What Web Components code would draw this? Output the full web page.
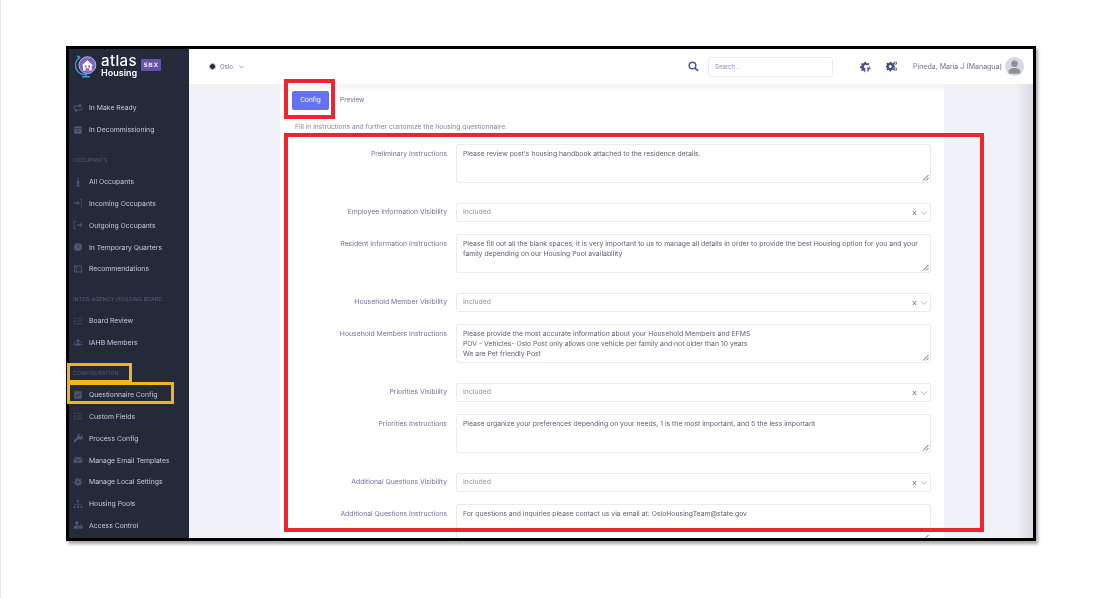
<!DOCTYPE html>
<html lang="en">
<head>
<meta charset="utf-8">
<title>Questionnaire Config</title>
<style>
  html, body { margin: 0; height: 598px; overflow: hidden; background: #fff; }
  body { font-family: Inter, "Open Sans", sans-serif; }
</style>
</head>
<body>
<atlas-page>
  <side-nav>
    <nav-item icon="repeat">In Make Ready</nav-item>
    <nav-item icon="archive">In Decommissioning</nav-item>
    <nav-section>OCCUPANTS</nav-section>
    <nav-item icon="person">All Occupants</nav-item>
    <nav-item icon="signin">Incoming Occupants</nav-item>
    <nav-item icon="signout">Outgoing Occupants</nav-item>
    <nav-item icon="clock">In Temporary Quarters</nav-item>
    <nav-item icon="panel">Recommendations</nav-item>
    <nav-section>INTER-AGENCY HOUSING BOARD</nav-section>
    <nav-item icon="list">Board Review</nav-item>
    <nav-item icon="users">IAHB Members</nav-item>
    <nav-section>CONFIGURATION</nav-section>
    <nav-item icon="check">Questionnaire Config</nav-item>
    <nav-item icon="list">Custom Fields</nav-item>
    <nav-item icon="wrench">Process Config</nav-item>
    <nav-item icon="mail">Manage Email Templates</nav-item>
    <nav-item icon="gear">Manage Local Settings</nav-item>
    <nav-item icon="tree">Housing Pools</nav-item>
    <nav-item icon="lock">Access Control</nav-item>
  </side-nav>
  <top-bar></top-bar>
  <config-card>
    <form-row label="Preliminary Instructions" kind="text">Please review post's housing handbook attached to the residence details.</form-row>
    <form-row label="Employee Information Visibility" kind="select">Included</form-row>
    <form-row label="Resident Information Instructions" kind="text">Please fill out all the blank spaces, it is very important to us to manage all details in order to provide the best Housing option for you and your<br>family depending on our Housing Pool availability</form-row>
    <form-row label="Household Member Visibility" kind="select">Included</form-row>
    <form-row label="Household Members Instructions" kind="text">Please provide the most accurate information about your Household Members and EFMS<br>POV - Vehicles- Oslo Post only allows one vehicle per family and not older than 10 years<br>We are Pet friendly Post</form-row>
    <form-row label="Priorities Visibility" kind="select">Included</form-row>
    <form-row label="Priorities Instructions" kind="text">Please organize your preferences depending on your needs, 1 is the most important, and 5 the less important</form-row>
    <form-row label="Additional Questions Visibility" kind="select">Included</form-row>
    <form-row label="Additional Questions Instructions" kind="text">For questions and inquiries please contact us via email at: OsloHousingTeam@state.gov</form-row>
  </config-card>
</atlas-page>

<script>
// Sidebar icons, all on a 16x16 box
const NAV_ICONS = {
  repeat: '<path d="M2 8.500V6.500A2 2 0 0 1 4 4.500h8M10 2l3 2.500-3 2.500M14 7.500v2a2 2 0 0 1-2 2H4M6 9l-3 2.500L6 14" fill="none" stroke="currentColor" stroke-width="1.800"/>',
  archive: '<path d="M2 2h12v3.500H2zM2 6.500h12V14H2z"/><path d="M6 9h4" stroke="#252a3b" stroke-width="1.200"/>',
  person: '<circle cx="8" cy="2.800" r="1.700"/><path d="M6 5.500h4l.5 5H9.500V14h-3v-3.500h-1z"/><ellipse cx="8" cy="14.200" rx="4" ry="1"/>',
  signin: '<path d="M1 7h6V4.500L11 8l-4 3.500V9H1z"/><path d="M11 2.500h2.500v11H11" fill="none" stroke="currentColor" stroke-width="1.100"/>',
  signout: '<path d="M6 7h5V4l4 4-4 4V9H6z"/><path d="M5 2.500H1.500v11H5" fill="none" stroke="currentColor" stroke-width="1.400"/>',
  clock: '<circle cx="8" cy="8" r="6.500"/><path d="M8 4v4.500l2.500 1" fill="none" stroke="#252a3b" stroke-width="1"/>',
  panel: '<path fill-rule="evenodd" d="M1.500 2.500h13v11h-13zM6 4v8h7V4zM3 4v8h1.700V4z"/>',
  list: '<path d="M1.500 2.500h2v2h-2zM1.500 7h2v2h-2zM1.500 11.500h2v2h-2zM5.500 3h9v1h-9zM5.500 7.500h9v1h-9zM5.500 12h9v1h-9z"/>',
  users: '<circle cx="8" cy="4.500" r="2.500"/><path d="M3.500 12c0-2.500 2-4 4.500-4s4.500 1.500 4.500 4z"/><circle cx="2.500" cy="7" r="1.300"/><circle cx="13.500" cy="7" r="1.300"/><path d="M0 11c0-1.200 1-2 2.500-2l.5 2zM16 11c0-1.200-1-2-2.500-2l-.5 2z"/>',
  check: '<path fill-rule="evenodd" d="M2 2h12v12H2zM4 8.200l3 3 5-5.500-1.100-1L7 9 5 7.100z"/>',
  wrench: '<path d="M14.500 3.500l-2.500 2-1.800-.5-.4-1.800 2.200-2.200a4 4 0 0 0-5 5L1.500 12a1.700 1.700 0 0 0 2.400 2.400L9 9.500a4 4 0 0 0 5.500-6z"/>',
  mail: '<path d="M1 3.500h14L8 8.500z"/><path d="M1 5l7 5 7-5v7.500H1z"/>',
  gear: '<circle cx="8" cy="8" r="5"/><path d="M7 1h2v3H7zM7 12h2v3H7zM1 7h3v2H1zM12 7h3v2h-3zM2.800 4.200l1.400-1.400 2 2-1.400 1.400zM9.800 11.200l1.400-1.400 2 2-1.400 1.400zM11.800 2.800l1.400 1.400-2 2-1.400-1.400zM4.800 9.800l1.400 1.400-2 2-1.400-1.400z"/><circle cx="8" cy="8" r="1.800" fill="#252a3b"/>',
  tree: '<circle cx="8" cy="3" r="2"/><circle cx="2.500" cy="13" r="1.700"/><circle cx="8" cy="13" r="1.700"/><circle cx="13.500" cy="13" r="1.700"/><path d="M2.500 11V8.500h11V11M8 5v6" fill="none" stroke="currentColor" stroke-width=".9"/>',
  lock: '<circle cx="6" cy="4.500" r="3"/><path d="M0.500 14c0-3.500 2.500-5.500 5.500-5.500 1 0 1.800.2 2.500.6V14z"/><path d="M9.500 9.500h6V14h-6z"/><path d="M11 9.500V8a1.500 1.500 0 0 1 3 0v1.500" fill="none" stroke="currentColor"/>'
};

class AtlasPage extends HTMLElement {
  constructor() {
    super();
    this.attachShadow({mode: 'open'}).innerHTML = `
      <style>
        :host { display: block; width: 1108px; height: 598px; box-sizing: border-box; padding: 46px 72px 57px 66px; border-left: 1px solid #e4e4e6; position: relative; }
        .frame { width: 970px; height: 495px; box-sizing: border-box; border: 3px solid #000; display: grid; grid-template-columns: 120px 1fr; grid-template-rows: 35px 1fr; overflow: hidden; box-shadow: 2px 3px 3px rgba(60,60,70,.45); background: #f1f2f7; margin-left: -1px; filter: blur(.3px); }
        ::slotted(side-nav) { grid-row: 1 / 3; }
        .red, .amber { position: absolute; box-sizing: border-box; pointer-events: none; z-index: 2; }
        .red { border: 4px solid #ee2430; }
        .amber { border: 3px solid #f5b41e; }
      </style>
      <div class="frame"><slot></slot></div>
      <div class="red" style="left:283px;top:79px;width:51px;height:40px"></div>
      <div class="red" style="left:283px;top:133px;width:700px;height:399px"></div>
      <div class="amber" style="left:66px;top:363px;width:65px;height:20px"></div>
      <div class="amber" style="left:66px;top:382px;width:107px;height:22px"></div>
    `;
  }
}

class SideNav extends HTMLElement {
  constructor() {
    super();
    this.attachShadow({mode: 'open'}).innerHTML = `
      <style>
        :host { display: block; background: #252a3b; overflow: hidden; min-height: 0; }
        .brand { height: 48px; box-sizing: border-box; padding: 5px 0 0 6px; display: flex; align-items: flex-start; gap: 3px; opacity: .999; }
        .words { display: flex; flex-direction: column; color: #fff; font-weight: 600; width: 37px; }
        .atlas { font-size: 15px; line-height: 14px; letter-spacing: .4px; font-weight: 500; }
        .housing { font-size: 9px; line-height: 10px; }
        .sbx { background: #6a50a8; color: #e6e0f5; font: 700 6px/12px "DejaVu Sans", sans-serif; letter-spacing: .5px; width: 20px; height: 12px; text-align: center; border-radius: 1px; margin: 5px 0 0 0; }
      </style>
      <div class="brand">
        <svg width="23" height="25" viewBox="0 0 26 27">
          <path d="M5 3.500A10.500 10.500 0 0 0 12 22.500M2.500 1.500l3.500 2" fill="none" stroke="#3f9ad8" stroke-width="1.800"/>
          <path d="M8 25h9M12.500 22v3" stroke="#3f9ad8" stroke-width="1.800"/>
          <circle cx="14" cy="12" r="9.500" fill="#7b63c4"/>
          <circle cx="14" cy="12" r="9.500" fill="none" stroke="#c9c1ea" stroke-width="1"/>
          <path d="M7.500 12.500L14 6.500l6.500 6h-1.500v5.500h-10v-5.500z" fill="#fff"/>
          <path d="M11 12.500h2v2h-2zM15 12.500h2v2h-2z" fill="#7b63c4"/>
          <path d="M12 15.500h4V18h-4z" fill="#e0486a"/>
        </svg>
        <div class="words"><span class="atlas">atlas</span><span class="housing">Housing</span></div>
        <span class="sbx">SBX</span>
      </div>
      <slot></slot>
    `;
  }
}

class NavSection extends HTMLElement {
  constructor() {
    super();
    this.attachShadow({mode: 'open'}).innerHTML = `
      <style>
        :host { display: block; height: 30.200px; box-sizing: border-box; padding: 14px 0 0 4px; font-size: 5.200px; line-height: 10px; letter-spacing: .22px; color: #565c7c; white-space: nowrap; opacity: .999; }
      </style>
      <slot></slot>
    `;
  }
}

class NavItem extends HTMLElement {
  constructor() {
    super();
    this.attachShadow({mode: 'open'});
  }

  connectedCallback() {
    const icon = NAV_ICONS[this.getAttribute('icon')] || '';
    this.shadowRoot.innerHTML = `
      <style>
        :host { display: flex; align-items: center; height: 21.800px; padding-left: 4px; color: #c6c9da; font-size: 6.850px; white-space: nowrap; opacity: .999; }
        svg { width: 10px; height: 10px; fill: currentColor; color: #4f5572; flex: none; }
        span { margin-left: 6px; }
      </style>
      <svg viewBox="0 0 16 16" aria-hidden="true">${icon}</svg>
      <span><slot></slot></span>
    `;
  }
}

class TopBar extends HTMLElement {
  constructor() {
    super();
    this.attachShadow({mode: 'open'}).innerHTML = `
      <style>
        :host { display: flex; align-items: center; background: #fff; padding: 0 9px 0 20px; color: #6b7090; font-size: 6px; position: relative; z-index: 1; }
        .dot { width: 7px; height: 7px; border-radius: 50%; background: #23273a; border: 1px solid #c9cad6; box-sizing: border-box; }
        .post, .name, input { opacity: .999; }
        .post { margin-left: 4px; }
        .grow { flex: 1; }
        input { width: 125px; height: 20px; box-sizing: border-box; border: 1px solid #e9eaf3; border-radius: 3px; margin: 0 27px 0 9px; padding: 0 6px; font: 6px Inter, sans-serif; color: #6b7090; outline: none; }
        input::placeholder { color: #8e92aa; opacity: 1; }
        svg.tool { fill: #4a5080; display: block; }
        .name { margin: 0 3px 0 15px; font-size: 7px; white-space: nowrap; }
        .avatar { width: 19px; height: 19px; border-radius: 50%; background: #d8d9e0; overflow: hidden; }
      </style>
      <span class="dot"></span>
      <span class="post">Oslo</span>
      <svg width="5" height="4" viewBox="0 0 6 4" style="margin-left:6px"><path d="M.5.500L3 3 5.500.500" fill="none" stroke="#6b7090" stroke-width=".9"/></svg>
      <span class="grow"></span>
      <svg width="11" height="11" viewBox="0 0 16 16"><circle cx="6.500" cy="6.500" r="4.800" fill="none" stroke="#4a5a92" stroke-width="2.200"/><path d="M10 10l4.500 4.500" stroke="#4a5a92" stroke-width="2.600"/></svg>
      <input placeholder="Search...">
      <svg class="tool" width="12" height="12" viewBox="0 0 16 16" style="margin-right:14px">
        <path d="M6 2h2l.4 1.600 1.400.6 1.400-.8 1.200 1.200-.8 1.400.3.800H9a2.200 2.200 0 1 0-2 3.700V16H6l-.4-1.600-1.400-.6-1.400.8-1.200-1.200.8-1.400-.6-1.400L0 10.200V8l1.800-.4.6-1.400-.8-1.400 1.200-1.200 1.400.8 1.400-.6z" transform="translate(0 -1)"/>
        <path d="M9 8.500h2.500l1-1.500 1 .6-.8 1.400 2.300 2-.7.800-2.200-1.800V14h-1v-2.500L9.500 14l-.8-.7 1.600-2.300z"/>
      </svg>
      <svg class="tool" width="12" height="12" viewBox="0 0 16 16">
        <path fill-rule="evenodd" d="M5 3h2l.3 1.400 1.300.5 1.200-.8 1.400 1.400-.8 1.200.5 1.300L12 8.300v2l-1.400.3-.5 1.300.8 1.200-1.400 1.400-1.200-.8-1.300.5L6.700 16h-2l-.3-1.800-1.300-.5-1.200.8L.5 13.100l.8-1.200-.5-1.300L-.5 10.300V8.300l1.300-.3.500-1.300-.8-1.200 1.400-1.400 1.200.8 1.300-.5zM5.700 7.300a2 2 0 1 0 0 4 2 2 0 0 0 0-4z" transform="translate(0 -2)"/>
        <path fill-rule="evenodd" d="M11 1h3.500v3.500H11zM12 2v1.500h1.500V2zM11 9h3.500v3.500H11zM12 10v1.500h1.500V10z"/>
      </svg>
      <span class="name">Pineda, Maria J (Managua)</span>
      <div class="avatar"><svg width="19" height="19" viewBox="0 0 19 19" style="display:block"><circle cx="9.500" cy="6.800" r="3.200" fill="#8e909c"/><path d="M3.500 15.500c0-3 2.500-4.500 6-4.500s6 1.500 6 4.500c0 .8-1 1.200-2 1.200h-8c-1 0-2-.4-2-1.200z" fill="#8e909c"/></svg></div>
    `;
  }
}

class ConfigCard extends HTMLElement {
  constructor() {
    super();
    this.attachShadow({mode: 'open'}).innerHTML = `
      <style>
        :host { display: block; min-height: 0; overflow: hidden; padding-left: 91px; background: linear-gradient(to right, #f1f2f7 0, #f1f2f7 98%, #d8d8e4 100%); }
        .card { width: 664px; height: 100%; box-sizing: border-box; background: linear-gradient(#f3f4f8, #fff 9px); padding: 6px 13px 0 12px; overflow: hidden; }
        .tabs { display: flex; align-items: center; gap: 11px; height: 20px; font-size: 6.500px; color: #6b7090; opacity: .999; }
        .active { width: 37px; height: 19px; background: #6472f5; color: #fff; border-radius: 2px; display: flex; align-items: center; justify-content: center; }
        p { margin: 12px 0 0 3px; height: 10px; font-size: 6.700px; line-height: 10px; color: #80849f; opacity: .999; }
        .rows { margin-top: 12px; }
      </style>
      <div class="card">
        <div class="tabs"><span class="active">Config</span><span>Preview</span></div>
        <p>Fill in instructions and further customize the housing questionnaire.</p>
        <div class="rows"><slot></slot></div>
      </div>
    `;
  }
}

class FormRow extends HTMLElement {
  constructor() {
    super();
    this.attachShadow({mode: 'open'});
  }

  connectedCallback() {
    const label = this.getAttribute('label') || '';
    const isSelect = this.getAttribute('kind') === 'select';
    const handle = '<svg class="grip" width="7" height="7" viewBox="0 0 7 7"><path d="M1 6.500L6.500 1M4 6.500L6.500 4" stroke="#555" stroke-width=".9"/></svg>';
    const tools = '<svg class="tools" width="16" height="6" viewBox="0 0 16 6"><path d="M.8 1l3.400 4M4.200 1L.8 5" stroke="#777c92" stroke-width="1"/><path d="M9 1.500l2.800 2.800 2.800-2.800" fill="none" stroke="#a9acc0" stroke-width=".9"/></svg>';
    this.shadowRoot.innerHTML = `
      <style>
        :host { display: grid; grid-template-columns: 155px 475px; column-gap: 9px; margin-bottom: ${isSelect ? 12.500 : 20}px; font-size: 6.850px; opacity: .999; }
        .label { text-align: right; color: #6f7395; line-height: 10px; padding-top: ${isSelect ? 4 : 5}px; white-space: nowrap; }
        .box { position: relative; box-sizing: border-box; height: ${isSelect ? 19 : 38.500}px; border: 1px solid #e9eaf3; border-radius: 2px; padding: 3.500px 6px; line-height: 10px; color: ${isSelect ? '#8c90a0' : '#5d6072'}; white-space: nowrap; overflow: hidden; }
        .grip { position: absolute; right: 1px; bottom: 1px; }
        .tools { position: absolute; right: 2px; top: 6px; }
      </style>
      <div class="label">${label}</div>
      <div class="box"><slot></slot>${isSelect ? tools : handle}</div>
    `;
  }
}

customElements.define('atlas-page', AtlasPage);
customElements.define('side-nav', SideNav);
customElements.define('nav-section', NavSection);
customElements.define('nav-item', NavItem);
customElements.define('top-bar', TopBar);
customElements.define('config-card', ConfigCard);
customElements.define('form-row', FormRow);
</script>
</body>
</html>
